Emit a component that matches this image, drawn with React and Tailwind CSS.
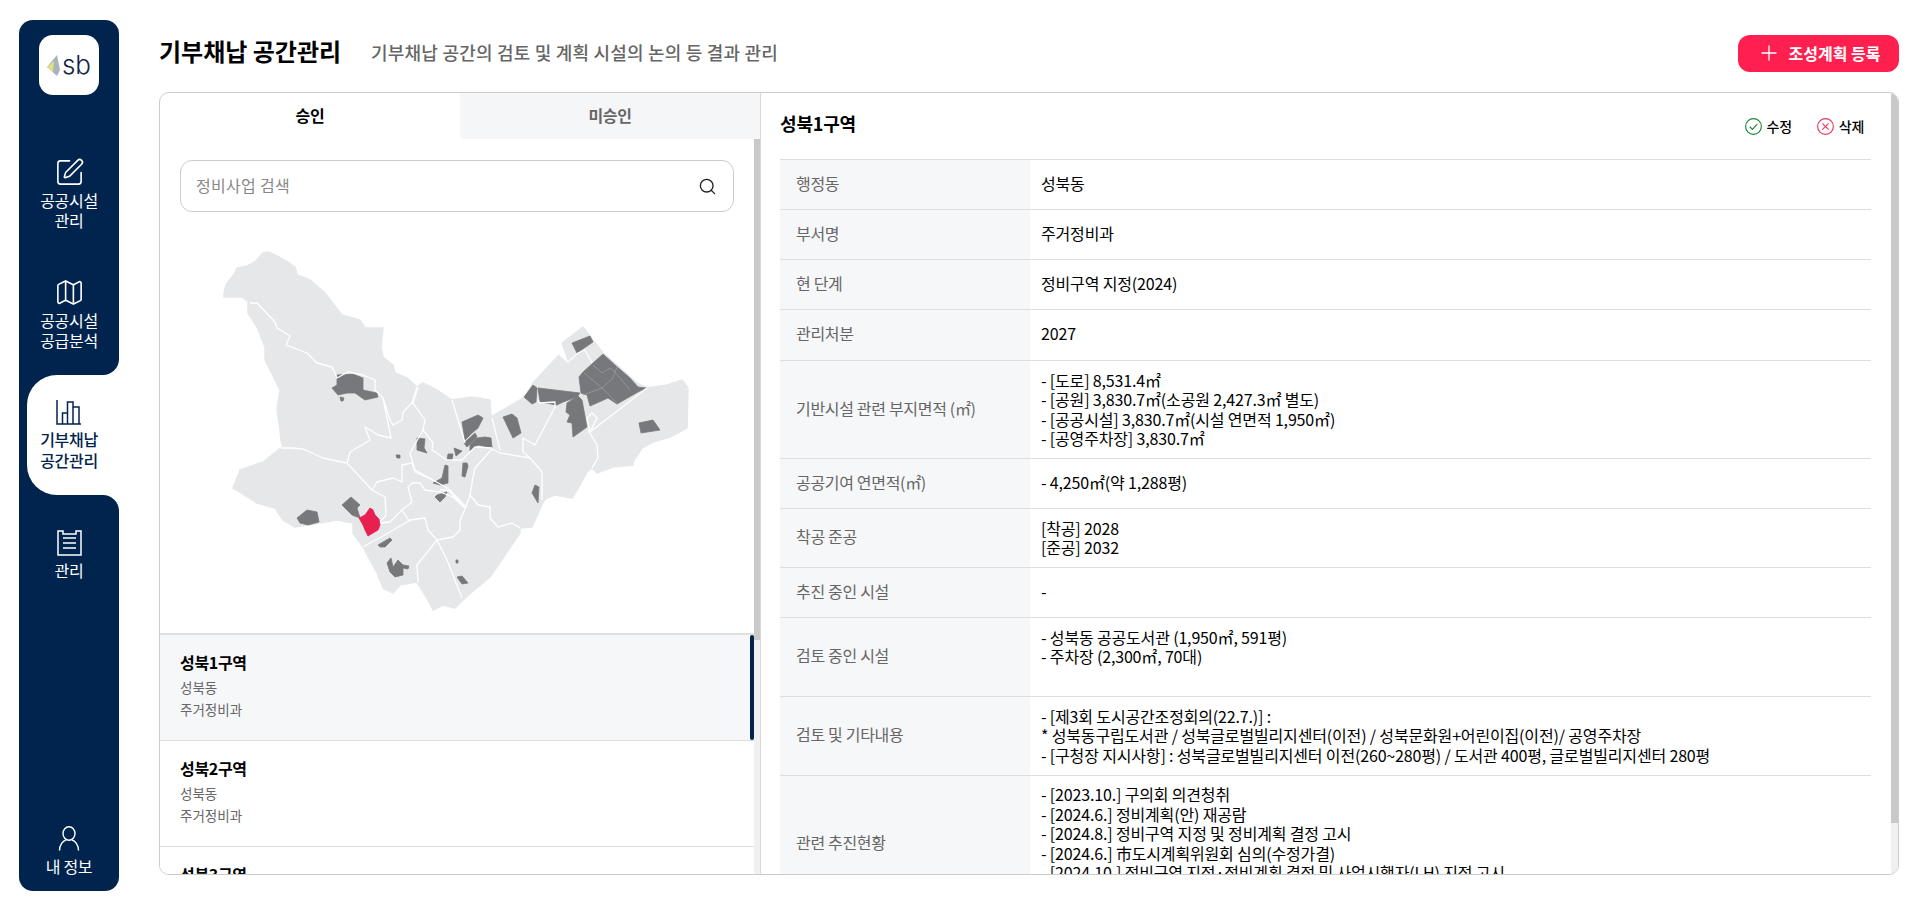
import { Plus, Search, SquarePen, Map as MapIcon } from 'lucide-react';

const LAND = '224,293 226,285 235,273 237,268 247,266 255,262 263,253 268,252 277,256 289,263 295,267 297,275 310,280 324,292 342,315 360,320 365,328 383,328 381,347 383,357 393,365 395,373 407,378 417,387 423,383 437,390 452,400 472,397 490,400 491,417 525,397 533,383 559,355 569,362 562,343 583,327 603,353 617,365 637,383 647,388 667,385 682,380 688,388 687,428 670,437 660,440 653,442 642,448 633,462 633,465 613,467 597,473 592,468 587,472 580,485 572,498 555,495 547,498 543,502 532,527 520,528 520,533 490,577 465,598 455,608 443,605 433,610 428,600 417,582 400,585 393,593 383,588 377,573 363,547 353,533 353,523 337,520 320,523 295,527 283,520 275,508 257,503 240,492 233,488 240,470 263,462 278,450 283,447 281,440 280,430 277,410 280,390 265,360 265,347 257,327 248,313 248,303 250,303 242,297 224,297';

const BORDERS = [
    '250,303 257,303 275,322 277,328 290,336 286,345 307,353 317,363 332,367 337,378 348,372 363,375 375,380 375,390 383,398 391,438 378,435 365,427 370,440 350,452 347,463',
    '383,398 390,420 393,425 402,420 403,412 412,403 417,387',
    '281,448 292,448 303,449 323,458 347,463 372,490 385,497 386,515 380,522',
    '372,490 377,482 393,478 402,482 402,465 412,463 415,472 433,480',
    '408,487 412,483 420,483 425,490 440,492 453,497 465,508',
    '408,487 412,502 402,510 390,522 380,523',
    '402,510 410,522',
    '363,547 390,532 410,520 425,518 428,530 437,540 453,537 460,530 460,520 466,507',
    '437,540 417,565 418,582',
    '437,540 447,560 462,598',
    '466,507 470,495 478,505 490,507 490,518 498,527 512,523 520,528',
    '466,507 450,490 440,490',
    '470,495 473,477 475,468 492,449',
    '492,449 500,453 530,458 542,472 542,500',
    '530,458 523,452 523,438 535,445 555,407 555,402 540,403 538,400',
    '588,430 597,445 598,458 592,468',
    '590,432 647,388',
    '590,432 597,418 592,413 587,418 590,432',
    '418,387 413,403 425,420 423,430 433,443 432,450 447,460 462,460 475,447 492,448',
    '423,430 410,453 415,470 433,480 447,488 460,503 465,508',
    '452,400 465,443',
    '492,418 500,450',
    '560,355 568,362 578,353 585,350 592,363',
];

const ZONES = [
    '337,375 353,374 363,378 363,390 377,393 378,397 365,400 355,393 347,393 338,395 332,388 337,385',
    '340,397 344,398 343,401 341,401',
    '572,343 590,336 593,342 577,353',
    '579,377 583,372 603,354 615,365 630,378 638,387 646,388 638,392 617,404 608,398 590,406 587,395 581,393',
    '538,388 580,393 577,397 563,402 557,405 540,402',
    '533,385 537,388 536,402 532,404 524,397',
    '567,403 578,396 582,400 587,427 573,437 572,423 567,422 570,415 566,412',
    '503,417 512,414 517,418 521,433 513,438',
    '639,423 653,420 660,430 641,433',
    '462,422 478,415 483,418 478,428 472,433 465,440',
    '470,445 477,438 485,437 491,438 492,448 478,445 470,451',
    '464,443 475,433 477,437 467,447',
    '454,448 462,451 456,456',
    '448,454 453,454 452,460 447,460',
    '417,438 425,439 424,448 427,453 417,450',
    '396,455 400,455 400,458 397,458',
    '463,463 467,463 468,466 465,477 462,476',
    '445,465 448,466 448,483 440,485 433,483 442,478',
    '437,495 447,492 445,497 440,502 435,497',
    '535,485 539,487 538,503 532,493',
    '297,518 307,510 317,512 319,522 308,525 300,523',
    '342,505 351,497 360,505 357,508 360,518 352,515',
    '378,545 390,538 392,540 385,547 380,547',
    '387,563 391,558 393,567 398,560 403,565 409,566 408,569 403,568 403,575 395,577 390,572',
    '456,560 458,560 458,563 456,563',
    '457,577 462,576 468,583 462,584',
];

const INNER_LINES = [
    '583,372 602,388 617,403',
    '593,365 602,373 610,368 615,372 613,378 602,388 583,395',
    '617,367 615,372 630,390',
];

const ROWS = [
    { label: '행정동', lines: ['성북동'] },
    { label: '부서명', lines: ['주거정비과'] },
    { label: '현 단계', lines: ['정비구역 지정(2024)'] },
    { label: '관리처분', lines: ['2027'], rowClass: 'h-[51px]' },
    {
        label: '기반시설 관련 부지면적 (㎡)',
        lines: ['- [도로] 8,531.4㎡', '- [공원] 3,830.7㎡(소공원 2,427.3㎡ 별도)', '- [공공시설] 3,830.7㎡(시설 연면적 1,950㎡)', '- [공영주차장] 3,830.7㎡'],
    },
    { label: '공공기여 연면적(㎡)', lines: ['- 4,250㎡(약 1,288평)'] },
    { label: '착공 준공', lines: ['[착공] 2028', '[준공] 2032'] },
    { label: '추진 중인 시설', lines: ['-'] },
    {
        label: '검토 중인 시설',
        lines: ['- 성북동 공공도서관 (1,950㎡, 591평)', '- 주차장 (2,300㎡, 70대)'],
        rowClass: 'h-[79px]',
        valueClass: 'justify-start',
    },
    {
        label: '검토 및 기타내용',
        lines: [
            '- [제3회 도시공간조정회의(22.7.)] :',
            '* 성북동구립도서관 / 성북글로벌빌리지센터(이전) / 성북문화원+어린이집(이전)/ 공영주차장',
            '- [구청장 지시사항] : 성북글로벌빌리지센터 이전(260~280평) / 도서관 400평, 글로벌빌리지센터 280평',
        ],
    },
    {
        label: '관련 추진현황',
        lines: [
            '- [2023.10.] 구의회 의견청취',
            '- [2024.6.] 정비계획(안) 재공람',
            '- [2024.8.] 정비구역 지정 및 정비계획 결정 고시',
            '- [2024.6.] 市도시계획위원회 심의(수정가결)',
            '- [2024.10.] 정비구역 지정·정비계획 결정 및 사업시행자(LH) 지정 고시',
        ],
        rowClass: 'h-[137px]',
        valueClass: 'justify-start',
    },
];

const DISTRICTS = [
    { name: '성북1구역', active: true },
    { name: '성북2구역' },
    { name: '성북3구역' },
];

function ChartIcon() {
    return (
        <svg width="26" height="26" viewBox="0 0 26 26" fill="none" stroke="currentColor" strokeWidth="1.5">
            <path d="M1 1v24h24" />
            <path d="M6.500 25V14h5v11M11.500 25V3H17v22M17 25V8h6v17" />
        </svg>
    );
}

function BoardIcon() {
    return (
        <svg width="25" height="26" viewBox="0 0 25 26" fill="none" stroke="currentColor" strokeWidth="1.5">
            <path d="M1 1h5v3h13V1h5v24H1z" />
            <path d="M6 8h13M6 13h13M6 18h13" />
        </svg>
    );
}

function UserIcon() {
    return (
        <svg width="22" height="25" viewBox="0 0 22 25" fill="none" stroke="currentColor" strokeWidth="1.4">
            <ellipse cx="11" cy="7.500" rx="6" ry="6.800" />
            <path d="M1.500 24.500c0-5.500 3.500-10 6.500-10.500M20.500 24.500c0-5.500-3.500-10-6.500-10.500" />
        </svg>
    );
}

function NavItem({ icon, lines, active }) {
    if (active) {
        return (
            <div className="relative ml-2 flex h-[120px] flex-col items-center justify-center rounded-l-[30px] bg-white pr-2 text-[16px] leading-[21px] font-medium tracking-[-0.02em] text-[#01244f]">
                <div className="absolute -top-4 right-0 size-4 bg-white">
                    <div className="size-4 rounded-br-[16px] bg-[#01244f]" />
                </div>
                <div className="absolute right-0 -bottom-4 size-4 bg-white">
                    <div className="size-4 rounded-tr-[16px] bg-[#01244f]" />
                </div>
                <div className="mb-[5px] flex h-[25px] items-center justify-center">{icon}</div>
                {lines.map((line) => (
                    <div key={line}>{line}</div>
                ))}
            </div>
        );
    }

    return (
        <div className="flex h-[120px] flex-col items-center justify-center text-[16px] leading-[20px] tracking-[-0.02em] text-white">
            <div className="mb-[5px] flex h-[25px] items-center justify-center">{icon}</div>
            {lines.map((line) => (
                <div key={line}>{line}</div>
            ))}
        </div>
    );
}

function Sidebar() {
    return (
        <aside className="flex w-[100px] shrink-0 flex-col rounded-[14px] bg-[#01244f]">
            <div className="mx-auto mt-[15px] mb-[40px] flex size-[60px] items-center justify-center gap-[2px] rounded-[14px] bg-white">
                <svg width="13" height="21" viewBox="0 0 13 21">
                    <polygon points="10,0 0,12 10,21 13,15" fill="#a9b2bd" />
                    <polygon points="7,6 0,12 6,17" fill="#dfe27f" />
                </svg>
                <span className="font-['Inter',sans-serif] text-[26px] leading-none font-light text-[#14234a]">sb</span>
            </div>
            <NavItem icon={<SquarePen size={31} strokeWidth={1.25} />} lines={['공공시설', '관리']} />
            <NavItem icon={<MapIcon size={31} strokeWidth={1.25} />} lines={['공공시설', '공급분석']} />
            <NavItem icon={<ChartIcon />} lines={['기부채납', '공간관리']} active />
            <NavItem icon={<BoardIcon />} lines={['관리']} />
            <div className="mt-auto flex flex-col items-center pb-[15px] text-[16px] leading-[20px] tracking-[-0.02em] text-white">
                <div className="mb-[5px]">
                    <UserIcon />
                </div>
                내 정보
            </div>
        </aside>
    );
}

function DistrictMap() {
    return (
        <svg className="mt-[38px] mb-[21px] ml-[62px] shrink-0" width="470" height="362" viewBox="222 250 470 362">
            <polygon points={LAND} fill="#e6e7e9" stroke="#e6e7e9" strokeWidth="1.5" strokeLinejoin="round" />
            {ZONES.map((points) => (
                <polygon key={points} points={points} fill="#77787b" stroke="#77787b" strokeWidth="0.8" strokeLinejoin="round" />
            ))}
            {INNER_LINES.map((points) => (
                <polyline key={points} points={points} fill="none" stroke="#9a9b9e" strokeWidth="0.8" />
            ))}
            {BORDERS.map((points) => (
                <polyline key={points} points={points} fill="none" stroke="#ffffff" strokeWidth="1.3" strokeLinejoin="round" />
            ))}
            <polygon
                points="359,518 365,515 370,508 373,510 375,515 379,519 380,525 378,530 368,536 365,530 363,525"
                fill="#e8204f"
                stroke="#e8204f"
                strokeWidth="0.8"
                strokeLinejoin="round"
            />
        </svg>
    );
}

function LeftColumn() {
    return (
        <section className="flex w-[601px] shrink-0 flex-col border-r border-[#d9d9d9]">
            <div className="flex h-[46px] shrink-0 text-[16px] font-semibold tracking-[-0.02em]">
                <div className="flex w-[300px] items-center justify-center pb-[2px] text-black">승인</div>
                <div className="flex w-[300px] items-center justify-center rounded-bl-[4px] bg-[#f5f6f8] pb-[2px] text-[#666]">미승인</div>
            </div>
            <div className="flex min-h-0 flex-1">
                <div className="flex w-[594px] flex-col overflow-hidden">
                    <div className="mx-5 mt-[21px] flex h-[52px] shrink-0 items-center justify-between rounded-[12px] border border-[#ccc] pr-[16px] pl-[15px]">
                        <span className="pb-[2px] text-[16px] tracking-[0.3px] text-[#888]">정비사업 검색</span>
                        <Search size={19} strokeWidth={1.7} className="text-[#222]" />
                    </div>
                    <DistrictMap />
                    <div className="border-t-2 border-[#dedede]">
                        {DISTRICTS.map((district) => (
                            <div
                                key={district.name}
                                className={`relative h-[106px] shrink-0 border-b border-[#dedede] pt-[15px] pl-[20px] ${district.active ? 'bg-[#f6f7f9]' : 'bg-white'}`}
                            >
                                {district.active && <div className="absolute top-0 right-0 bottom-0 w-[4px] rounded-[2px] bg-[#01244f]" />}
                                <div className="text-[16px] leading-[24px] font-semibold tracking-[-0.02em] text-black">{district.name}</div>
                                <div className="mt-[2px] text-[13.500px] leading-[22px] text-[#666]">성북동</div>
                                <div className="text-[13.500px] leading-[22px] text-[#666]">주거정비과</div>
                            </div>
                        ))}
                    </div>
                </div>
                <div className="w-[6px] bg-[#f0f0f0]">
                    <div className="h-[501px] bg-[#c9c9c9]" />
                </div>
            </div>
        </section>
    );
}

function InfoTable() {
    return (
        <div className="border-t border-[#dedede]">
            {ROWS.map((row) => (
                <div
                    key={row.label}
                    className={`grid min-h-[50px] grid-cols-[250px_1fr] border-b border-[#dedede] text-[16px] leading-[19.500px] ${row.rowClass ?? ''}`}
                >
                    <div className="flex items-center bg-[#f6f7f9] pb-[2px] pl-4 tracking-[-0.02em] text-[#666]">{row.label}</div>
                    <div
                        className={`flex flex-col justify-center pl-[11px] tracking-[-0.01em] text-black ${row.lines.length === 1 ? 'pt-[9px] pb-[11px]' : 'py-[9.500px]'} ${row.valueClass ?? ''}`}
                    >
                        {row.lines.map((line) => (
                            <div key={line}>{line}</div>
                        ))}
                    </div>
                </div>
            ))}
        </div>
    );
}

function RightColumn() {
    return (
        <section className="flex min-w-0 flex-1">
            <div className="flex-1 overflow-hidden pr-[20px] pl-[19px]">
                <div className="flex h-[66px] items-center justify-between pr-[7px]">
                    <h2 className="pb-[5px] text-[18px] font-semibold tracking-[-0.01em] text-black">성북1구역</h2>
                    <div className="flex items-center gap-[25px] text-[14px] font-medium tracking-[-0.02em] text-black">
                        <span className="flex items-center gap-[5px]">
                            <svg width="17" height="17" viewBox="0 0 16 16" fill="none" stroke="#1f8a3b" strokeWidth="1.1">
                                <circle cx="8" cy="8" r="7.400" />
                                <path d="M4.500 8.200l2.500 2.500 4.500-5" />
                            </svg>
                            수정
                        </span>
                        <span className="flex items-center gap-[5px]">
                            <svg width="17" height="17" viewBox="0 0 16 16" fill="none" stroke="#f0395f" strokeWidth="1.1">
                                <circle cx="8" cy="8" r="7.400" />
                                <path d="M5 5l6 6M11 5l-6 6" />
                            </svg>
                            삭제
                        </span>
                    </div>
                </div>
                <InfoTable />
            </div>
            <div className="w-[7px] shrink-0 bg-[#f0f0f0]">
                <div className="h-[730px] bg-[#c9c9c9]" />
            </div>
        </section>
    );
}

export default function App() {
    return (
        <div className="flex h-screen gap-10 overflow-hidden bg-white pt-5 pr-[19px] pb-[17px] pl-[19px] font-['Noto_Sans_CJK_KR',sans-serif]">
            <Sidebar />
            <main className="flex min-w-0 flex-1 flex-col pb-4">
                <header className="flex h-[72px] shrink-0 items-start justify-between">
                    <div className="mt-[15px] flex items-center gap-[30px]">
                        <h1 className="-mt-[2px] text-[24px] leading-[34px] font-semibold text-black">기부채납 공간관리</h1>
                        <p className="text-[18px] leading-[34px] font-medium tracking-[0.2px] text-[#666]">기부채납 공간의 검토 및 계획 시설의 논의 등 결과 관리</p>
                    </div>
                    <button className="mt-[15px] flex h-[37px] w-[161px] items-center justify-center gap-[8px] rounded-[12px] bg-[#ff2050] pb-[1px] text-[16px] font-bold text-white">
                        <Plus size={24} strokeWidth={1.3} />
                        조성계획 등록
                    </button>
                </header>
                <div className="flex min-h-0 flex-1 overflow-hidden rounded-[10px] border border-[#ccc]">
                    <LeftColumn />
                    <RightColumn />
                </div>
            </main>
        </div>
    );
}
